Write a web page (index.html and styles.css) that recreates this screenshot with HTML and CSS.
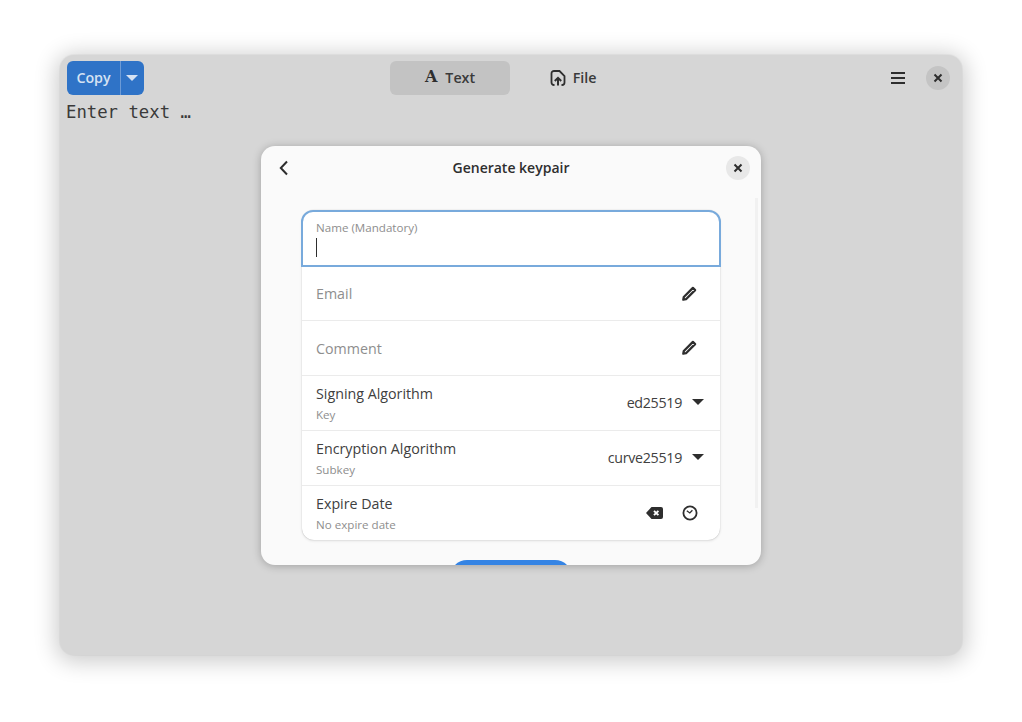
FILE: index.html
```html
<!DOCTYPE html>
<html lang="en">
<head>
    <meta charset="UTF-8">
    <title>Encrypt</title>
    <link rel="stylesheet" href="styles.css">
</head>
<body>
    <div class="window">
        <header class="headerbar">
            <div class="split-btn">
                <span class="split-label">Copy</span>
                <span class="split-arrow"><span class="caret caret-white"></span></span>
            </div>
            <nav class="tabs">
                <div class="tab tab-active"><span class="tab-glyph">A</span><span>Text</span></div>
                <div class="tab tab-file">
                    <svg class="icon" viewBox="0 0 16 16"><path d="M4.500 15H4a2.500 2.500 0 0 1-2.500-2.500v-9A2.500 2.500 0 0 1 4 1h5.500l5 5v6.500A2.500 2.500 0 0 1 12 15h-.5" fill="none" stroke="#2e2e2e" stroke-width="1.8"/><path d="M8 15.500V8.500M4.800 11 8 7.800l3.200 3.200" fill="none" stroke="#2e2e2e" stroke-width="2"/></svg>
                    <span>File</span>
                </div>
            </nav>
            <div class="header-end">
                <div class="menu-btn"><span></span><span></span><span></span></div>
                <div class="round-btn round-btn-window">
                    <svg class="x-icon" viewBox="0 0 10 10"><path d="M1.500 1.500l7 7M8.500 1.500l-7 7" stroke="#2e2e2e" stroke-width="2"/></svg>
                </div>
            </div>
        </header>
        <div class="editor">Enter text …</div>

        <div class="dialog">
            <div class="dialog-head">
                <svg class="back-icon" viewBox="0 0 10 16"><path d="M8 1.500 1.800 8 8 14.500" fill="none" stroke="#2e2e2e" stroke-width="2"/></svg>
                <h1>Generate keypair</h1>
                <div class="round-btn round-btn-dialog">
                    <svg class="x-icon" viewBox="0 0 10 10"><path d="M1.500 1.500l7 7M8.500 1.500l-7 7" stroke="#2e2e2e" stroke-width="2"/></svg>
                </div>
            </div>
            <div class="dialog-body">
                <div class="scrollbar"></div>
                <div class="list">
                    <div class="entry-focus">
                        <div class="entry-title">Name (Mandatory)</div>
                        <div class="cursor"></div>
                    </div>
                    <div class="row">
                        <span class="placeholder">Email</span>
                        <svg class="pencil" viewBox="0 0 16 16"><path d="M11.900 1.900 14.100 4.100 5 13.200 2.300 13.700 2.800 11Z" fill="none" stroke="#2e2e2e" stroke-width="2.300" stroke-linejoin="round"/></svg>
                    </div>
                    <div class="row">
                        <span class="placeholder">Comment</span>
                        <svg class="pencil" viewBox="0 0 16 16"><path d="M11.900 1.900 14.100 4.100 5 13.200 2.300 13.700 2.800 11Z" fill="none" stroke="#2e2e2e" stroke-width="2.300" stroke-linejoin="round"/></svg>
                    </div>
                    <div class="row">
                        <div class="row-text"><div>Signing Algorithm</div><small>Key</small></div>
                        <div class="combo"><span>ed25519</span><span class="caret"></span></div>
                    </div>
                    <div class="row">
                        <div class="row-text"><div>Encryption Algorithm</div><small>Subkey</small></div>
                        <div class="combo"><span>curve25519</span><span class="caret"></span></div>
                    </div>
                    <div class="row">
                        <div class="row-text"><div>Expire Date</div><small>No expire date</small></div>
                        <div class="row-icons">
                            <svg class="icon-back" viewBox="0 0 17 12"><path d="M5.500 0H15a2 2 0 0 1 2 2v8a2 2 0 0 1-2 2H5.500L0 6Z" fill="#2e2e2e"/><path d="M8 3.800l4.400 4.400M12.400 3.800 8 8.200" stroke="#fff" stroke-width="1.900"/></svg>
                            <svg class="icon-clock" viewBox="0 0 16 16"><circle cx="8" cy="8" r="6.600" fill="none" stroke="#2e2e2e" stroke-width="1.800"/><path d="M4.800 5.800 7.800 8 10.400 5.200" fill="none" stroke="#2e2e2e" stroke-width="1.300"/></svg>
                        </div>
                    </div>
                </div>
                <div class="generate-btn"></div>
            </div>
        </div>
    </div>
</body>
</html>
```

FILE: styles.css
```css
* {
    box-sizing: border-box;
    margin: 0;
    padding: 0;
}

body {
    width: 1022px;
    height: 722px;
    background: #fff;
    padding: 55px 60px 67px;
    font-family: "Open Sans", "Noto Sans", sans-serif;
    color: #2e2e2e;
    overflow: hidden;
}

.window {
    position: relative;
    width: 902px;
    height: 600px;
    background: #d6d6d6;
    border-radius: 14px;
    box-shadow: 0 0 0 1px rgba(0, 0, 0, 0.03), 0 3px 22px 4px rgba(0, 0, 0, 0.2);
}

.headerbar {
    height: 46px;
    padding: 6px 12px 6px 7px;
    display: grid;
    grid-template-columns: 323px 240px 1fr;
    align-items: center;
}

.split-btn {
    width: 77px;
    height: 34px;
    background: #2f73c7;
    border-radius: 6px;
    display: flex;
    color: #d5e2f3;
    font-size: 14.250px;
    font-weight: 600;
}

.split-label {
    width: 54px;
    padding-bottom: 2px;
    display: flex;
    align-items: center;
    justify-content: center;
    border-right: 1px solid #6d9bd6;
}

.split-arrow {
    flex: 1;
    padding-right: 1px;
    display: flex;
    align-items: center;
    justify-content: center;
}

.caret {
    width: 0;
    height: 0;
    border-left: 6px solid transparent;
    border-right: 6px solid transparent;
    border-top: 6px solid #2e2e2e;
}

.caret-white {
    border-top-color: #d5e2f3;
}

.tabs {
    display: flex;
    font-size: 14.250px;
    font-weight: 600;
    color: #3a3a3a;
}

.tab {
    width: 120px;
    height: 34px;
    padding-bottom: 2px;
    border-radius: 6px;
    display: flex;
    align-items: center;
    justify-content: center;
    gap: 7px;
}

.tab-active {
    background: #c3c3c3;
}

.tab-file {
    padding-left: 6px;
}

.tab-glyph {
    font-family: "DejaVu Serif", serif;
    font-weight: 700;
    font-size: 16px;
    line-height: 1;
    color: #2e2e2e;
    margin-right: 1px;
}

.icon {
    width: 16px;
    height: 16px;
    margin-top: 2px;
}

.header-end {
    display: flex;
    align-items: center;
    justify-content: flex-end;
    gap: 21px;
}

.menu-btn {
    width: 14px;
    display: flex;
    flex-direction: column;
    gap: 3px;
}

.menu-btn span {
    height: 2px;
    background: #2e2e2e;
}

.round-btn {
    width: 24px;
    height: 24px;
    border-radius: 50%;
    display: flex;
    align-items: center;
    justify-content: center;
}

.round-btn-window {
    background: #c4c4c4;
}

.round-btn-dialog {
    background: #e8e8e8;
    position: absolute;
    right: 11px;
    top: 10px;
}

.x-icon {
    width: 10px;
    height: 10px;
}

.editor {
    padding-left: 6px;
    padding-top: 1px;
    font-family: "DejaVu Sans Mono", monospace;
    font-size: 17.300px;
    line-height: 20px;
    color: #3a3a3a;
}

.dialog {
    position: absolute;
    left: 201px;
    top: 91px;
    width: 500px;
    height: 419px;
    background: #fafafa;
    border-radius: 14px;
    overflow: hidden;
    box-shadow: 0 1px 8px rgba(0, 0, 0, 0.25);
}

.dialog-head {
    height: 46px;
    padding-bottom: 3px;
    display: flex;
    align-items: center;
    justify-content: center;
}

.dialog-head h1 {
    font-size: 14px;
    font-weight: 600;
    color: #2e2e2e;
}

.back-icon {
    position: absolute;
    left: 18px;
    top: 14px;
    width: 10px;
    height: 16px;
}

.dialog-body {
    padding: 19px 41px 0;
}

.scrollbar {
    position: absolute;
    left: 494px;
    top: 52px;
    width: 3px;
    height: 310px;
    background: #f1f1f1;
}

.list {
    width: 418px;
    margin-top: -1px;
    background: #fff;
    border-radius: 12px;
    box-shadow: 0 0 1px rgba(0, 0, 0, 0.3), 0 1px 3px rgba(0, 0, 0, 0.1);
}

.entry-focus {
    width: 420px;
    height: 57px;
    margin: 0 -1px;
    padding: 8px 13px 0;
    border: 2px solid #78aadc;
    border-radius: 12px 12px 0 0;
}

.entry-title {
    font-size: 11.600px;
    line-height: 16px;
    color: #8e8e8e;
}

.cursor {
    width: 1px;
    height: 19px;
    margin-top: 2px;
    background: #2e2e2e;
}

.row {
    height: 55px;
    padding: 0 22px 0 14px;
    border-top: 1px solid #ebebeb;
    display: flex;
    align-items: center;
    justify-content: space-between;
    font-size: 14.250px;
    color: #404040;
}

.row:nth-child(2) {
    height: 53px;
    border-top: 0;
}

.placeholder {
    color: #8e8e8e;
}

.pencil {
    width: 16px;
    height: 16px;
    margin-right: 1px;
}

.row-text {
    padding-top: 1px;
    line-height: 20px;
}

.row-text small {
    display: block;
    font-size: 11.600px;
    line-height: 18px;
    margin-top: 2px;
    color: #8e8e8e;
}

.combo {
    display: flex;
    align-items: center;
    gap: 10px;
    margin-right: -6px;
    letter-spacing: -0.3px;
    padding-bottom: 2px;
}

.row-icons {
    display: flex;
    align-items: center;
    gap: 19px;
}

.icon-back {
    width: 17px;
    height: 12px;
}

.icon-clock {
    width: 16px;
    height: 16px;
}

.generate-btn {
    width: 122px;
    height: 34px;
    margin: 20px auto 0;
    background: #3584e4;
    border-radius: 17px;
}
```
